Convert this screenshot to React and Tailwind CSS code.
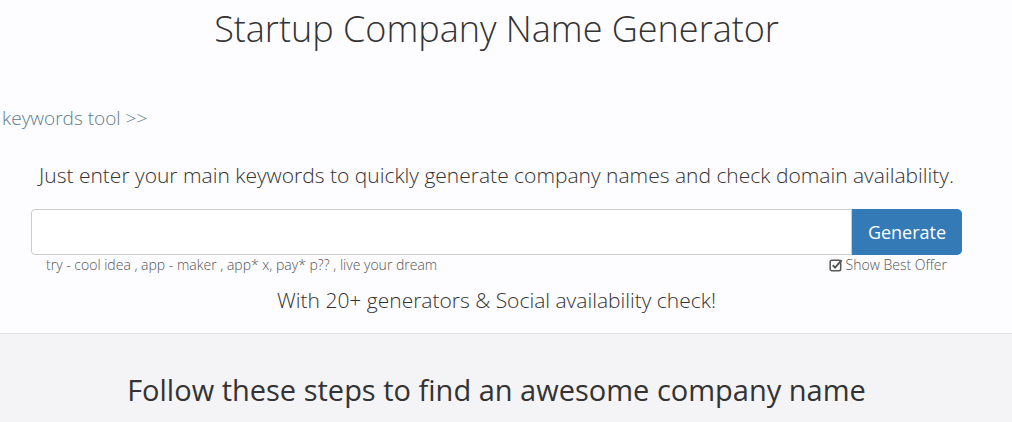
import React from 'react'

function CheckIcon() {
    return (
        <svg width="14" height="14" viewBox="0 0 12 12" className="mr-[3px]">
            <rect x="1" y="2" width="9" height="9" rx="1.5" fill="none" stroke="#555" strokeWidth="1.3" />
            <path d="M3.2 6.2 L5.2 8.2 L10.8 1.8" fill="none" stroke="#555" strokeWidth="1.7" />
        </svg>
    )
}

export default function App() {
    return (
        <div className="w-[1012px] min-h-[422px] bg-[#fdfcfe] text-[#333] font-['Open_Sans',sans-serif] overflow-hidden">
            <div className="w-[993px]">
                {/* header */}
                <h1 className="pt-[9px] text-center text-[36px] leading-[40px] font-light text-[#333]">
                    Startup Company Name Generator
                </h1>
                <div className="mt-[57px] pl-[2px] text-[19px] leading-[24px] font-light text-[#5b7c8c]">
                    keywords tool &gt;&gt;
                </div>
                <p className="mt-[31px] text-center text-[21px] leading-[28px] font-light text-[#333]">
                    Just enter your main keywords to quickly generate company names and check domain availability.
                </p>

                {/* search */}
                <div className="mx-[31px] mt-[20px] flex h-[46px]">
                    <input type="text" className="flex-1 rounded-l-[4px] border border-[#ccc] bg-white px-3 text-[18px] outline-none" />
                    <button className="w-[110px] rounded-r-[5px] bg-[#337ab7] text-[18px] font-normal text-white">Generate</button>
                </div>
                <div className="mx-[46px] mt-[0px] flex items-center justify-between text-[14px] leading-[20px] font-light text-[#555]">
                    <span>try - cool idea , app - maker , app* x, pay* p?? , live your dream</span>
                    <span className="flex items-center"><CheckIcon />Show Best Offer</span>
                </div>
                <p className="mt-[11px] text-center text-[21px] leading-[28px] font-light text-[#333]">
                    With 20+ generators &amp; Social availability check!
                </p>
            </div>

            {/* steps */}
            <div className="mt-[19px] border-t border-[#e3e2e5] bg-[#f4f3f6] pt-[38px] pb-[40px]">
                <h2 className="w-[993px] text-center text-[29px] leading-[36px] font-normal text-[#333]">
                    Follow these steps to find an awesome company name
                </h2>
            </div>
        </div>
    )
}
